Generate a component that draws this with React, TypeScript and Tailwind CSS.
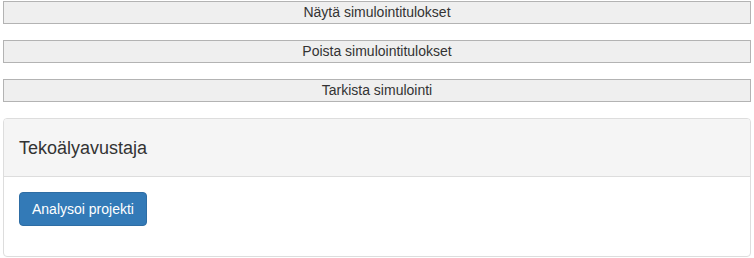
import React from 'react';

const font = { fontFamily: '"Liberation Sans", Arial, sans-serif' };

const actions = ['Näytä simulointitulokset', 'Poista simulointitulokset', 'Tarkista simulointi'];

export default function App() {
    return (
        <div className="px-[3px] pt-[1px] bg-white text-[#333]" style={font}>
            <div className="flex flex-col gap-4">
                {actions.map((label) => (
                    <button
                        key={label}
                        className="block w-full h-[23px] border border-[#b3b3b3] bg-[#efefef] text-[14px] leading-[21px] text-[#333]"
                    >
                        {label}
                    </button>
                ))}
            </div>

            {/* AI assistant panel */}
            <div className="mt-4 border border-[#ddd] rounded-[4px] overflow-hidden">
                <div className="h-[58px] flex items-center px-[15px] bg-[#f5f5f5] border-b border-[#ddd]">
                    <h3 className="text-[18px] leading-[20px] text-[#333]">Tekoälyavustaja</h3>
                </div>
                <div className="px-[15px] pt-[15px] pb-[30px]">
                    <button className="h-[34px] px-[12px] rounded-[4px] border border-[#2e6da4] bg-[#337ab7] text-white text-[14px] leading-[20px]">
                        Analysoi projekti
                    </button>
                </div>
            </div>
        </div>
    );
}
